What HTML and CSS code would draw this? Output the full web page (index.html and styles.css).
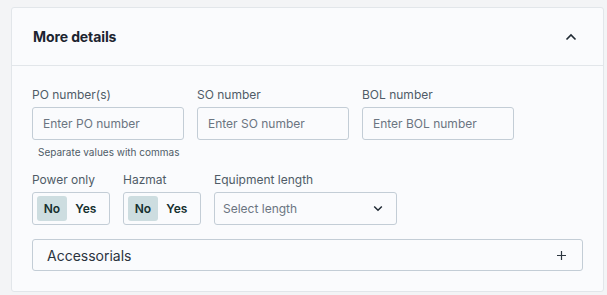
FILE: index.html
```html
<!DOCTYPE html>
<html lang="en">
<head>
  <meta charset="UTF-8">
  <title>More details</title>
  <link rel="stylesheet" href="styles.css">
</head>
<body>
  <section class="card">
    <header class="card-head">
      <h2 class="card-title">More details</h2>
      <svg class="chev" width="12" height="8" viewBox="0 0 12 8"><path d="M1.5 6.5 L6 2 L10.5 6.5" fill="none" stroke="#1f2933" stroke-width="1.6"/></svg>
    </header>
    <div class="card-body">
      <div class="row">
        <div class="field">
          <label class="lbl">PO number(s)</label>
          <input class="inp" type="text" placeholder="Enter PO number">
          <div class="hint">Separate values with commas</div>
        </div>
        <div class="field">
          <label class="lbl">SO number</label>
          <input class="inp" type="text" placeholder="Enter SO number">
        </div>
        <div class="field">
          <label class="lbl">BOL number</label>
          <input class="inp" type="text" placeholder="Enter BOL number">
        </div>
      </div>
      <div class="row row-2">
        <div class="field field-toggle">
          <label class="lbl">Power only</label>
          <div class="toggle"><span class="opt on">No</span><span class="opt">Yes</span></div>
        </div>
        <div class="field field-toggle">
          <label class="lbl">Hazmat</label>
          <div class="toggle"><span class="opt on">No</span><span class="opt">Yes</span></div>
        </div>
        <div class="field field-select">
          <label class="lbl">Equipment length</label>
          <div class="select">
            <span>Select length</span>
            <svg width="10" height="7" viewBox="0 0 10 7"><path d="M1.2 1.5 L5 5.2 L8.8 1.5" fill="none" stroke="#1f2933" stroke-width="1.5"/></svg>
          </div>
        </div>
      </div>
      <div class="accordion">
        <span>Accessorials</span>
        <svg width="11" height="11" viewBox="0 0 11 11"><path d="M5.5 1 V10 M1 5.5 H10" fill="none" stroke="#2d3640" stroke-width="1.2"/></svg>
      </div>
    </div>
  </section>
</body>
</html>
```

FILE: styles.css
```css
body {
  margin: 0;
  padding: 7px 3px 0 11px;
  background: #f3f4f6;
  font-family: Inter, "Noto Sans", sans-serif;
}
.card {
  width: 593px;
  box-sizing: border-box;
  background: #fafbfd;
  border: 1px solid #e2e6ea;
  border-radius: 3px;
}
.card-head {
  height: 57px;
  display: flex;
  align-items: center;
  justify-content: space-between;
  padding: 0 26px 0 21px;
  border-bottom: 1px solid #e2e6ea;
}
.card-title {
  margin: 0;
  font-size: 14px;
  font-weight: 700;
  color: #1c2430;
  letter-spacing: -0.1px;
}
.card-body {
  padding: 21px 20px 20px 20px;
}
.row {
  display: flex;
  gap: 13px;
}
.row-2 {
  margin-top: 13px;
}
.field {
  width: 152px;
  display: flex;
  flex-direction: column;
}
.field-toggle { width: 78px; }
.field-select { width: 183px; }
.lbl {
  font-size: 12px;
  line-height: 16px;
  color: #4f5b67;
  margin-bottom: 4px;
  white-space: nowrap;
}
.inp {
  height: 33px;
  box-sizing: border-box;
  border: 1px solid #c3cdd6;
  border-radius: 3px;
  background: #fafbfd;
  padding: 0 10px;
  font-family: inherit;
  font-size: 12px;
  color: #1c2430;
}
.inp::placeholder { color: #6b7581; }
.hint {
  font-size: 10px;
  line-height: 14px;
  color: #4f5b67;
  margin: 5px 0 0 6px;
  white-space: nowrap;
}
.toggle {
  height: 33px;
  box-sizing: border-box;
  border: 1px solid #c3cdd6;
  border-radius: 3px;
  display: flex;
  align-items: center;
  padding: 0 4px;
}
.opt {
  width: 31px;
  height: 25px;
  line-height: 25px;
  text-align: center;
  font-size: 12px;
  font-weight: 600;
  color: #15302f;
  border-radius: 3px;
}
.opt + .opt { width: 40px; }
.opt.on { background: #cddde0; }
.select {
  height: 33px;
  box-sizing: border-box;
  border: 1px solid #c3cdd6;
  border-radius: 3px;
  display: flex;
  align-items: center;
  justify-content: space-between;
  padding: 0 13px 0 8px;
  font-size: 12px;
  color: #6b7581;
}
.accordion {
  margin-top: 14px;
  height: 32px;
  box-sizing: border-box;
  border: 1px solid #c3cdd6;
  border-radius: 3px;
  display: flex;
  align-items: center;
  justify-content: space-between;
  padding: 0 15px 0 14px;
  font-size: 14px;
  color: #2b333d;
}
```
